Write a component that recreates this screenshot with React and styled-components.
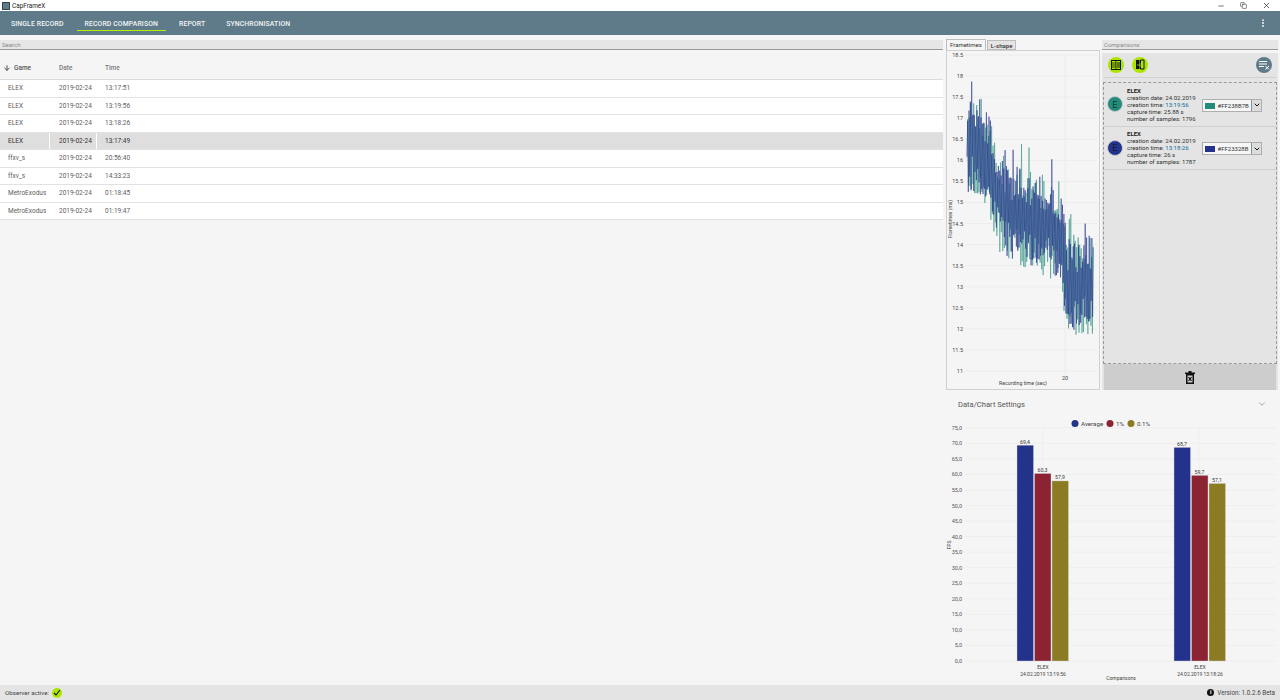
import React from "react";
import styled, { createGlobalStyle } from "styled-components";
import { ArrowDown, ChevronDown, EllipsisVertical, Minus, Copy, X } from "lucide-react";

const Global = createGlobalStyle`
  html, body { margin: 0; padding: 0; background: #f5f5f5; }
  * { box-sizing: border-box; }
  #root { font-family: Roboto, "Noto Sans", sans-serif; }
`;
const Page = styled.div`display:flex;flex-direction:column;width:1280px;height:700px;overflow:hidden;background:#f5f5f5;`;
const TitleBar = styled.div`display:flex;align-items:center;height:11px;background:#fff;padding-left:2px;font:6.4px Roboto,sans-serif;color:#222;`;
const AppIcon = styled.div`width:8px;height:8px;background:#5f7a88;border:1px solid #34434c;margin-right:2px;`;
const WinButtons = styled.div`margin-left:auto;display:flex;gap:15px;padding-right:9px;color:#333;align-items:center;`;
const Nav = styled.nav`display:flex;align-items:stretch;height:24px;background:#5f7b8a;padding-left:3px;padding-right:12px;`;
const NavItem = styled.div`display:flex;align-items:center;padding:6px 8px 0;margin-right:5px;font-size:6.85px;font-weight:500;color:#f2f5f6;letter-spacing:.12px;border-bottom:1px solid ${p => p.$active ? "#b4f000" : "transparent"};margin-bottom:4px;white-space:nowrap;`;
const Spacer = styled.div`flex:1;`;
const More = styled.div`display:flex;align-items:center;color:#fff;`;
const Main = styled.main`flex:1;display:flex;min-height:0;`;
const Left = styled.section`width:945px;padding:5px 2px 0 0;display:flex;flex-direction:column;`;
const FieldBar = styled.div`height:10px;background:#e6e6e6;border-bottom:1px solid #9a9a9a;font-size:6px;color:#8a8a8a;line-height:9px;padding-left:2px;`;
const Row = styled.div`display:grid;grid-template-columns:50px 47px 1fr;height:17.5px;border-bottom:1px solid #e2e2e2;background:#fff;align-items:stretch;font-size:6.5px;color:#5e5e5e;`;
const HeadRow = styled(Row)`height:30px;background:#f5f5f5;border-bottom:1px solid #dcdcdc;color:#7b7b7b;font-weight:500;padding-top:6px;`;
const Cell = styled.div`display:flex;align-items:center;padding-left:${p => p.$pl}px;background:${p => p.$sel ? "#dedede" : "transparent"};margin-right:${p => p.$sel && p.$gap ? "1.5px" : 0};color:${p => p.$sel ? "#333" : "inherit"};overflow:hidden;white-space:nowrap;`;
const Clip = styled.span`display:block;width:37.5px;overflow:hidden;`;
const SortIcon = styled(ArrowDown)`margin-right:3px;color:#333;`;
const GameHead = styled.span`color:#555;`;
const Right = styled.section`width:335px;display:flex;flex-direction:column;padding-top:4px;`;
const TopRow = styled.div`display:flex;height:351px;`;
const ChartCol = styled.div`width:155px;margin-left:1px;display:flex;flex-direction:column;`;
const Tabs = styled.div`display:flex;height:11px;align-items:flex-end;`;
const Tab = styled.div`height:${p => p.$active ? "11px" : "10px"};padding:0 3px;margin-right:1px;font-size:6px;font-weight:${p => p.$active ? 400 : 500};line-height:9.5px;color:#333;background:${p => p.$active ? "#f5f5f5" : "#e4e4e4"};border:1px solid #bdbdbd;border-bottom:${p => p.$active ? "none" : "1px solid #bdbdbd"};`;
const ChartBox = styled.div`height:340px;width:154px;background:#f5f5f5;border:1px solid #d0d0d0;`;
const CompCol = styled.div`width:176px;margin-left:1px;display:flex;flex-direction:column;padding-top:1px;`;
const CompBox = styled.div`margin-top:3px;flex:1;background:#e4e4e4;display:flex;flex-direction:column;padding:0 1px;`;
const Toolbar = styled.div`display:flex;align-items:center;height:25px;padding:0 4px 1px 3.5px;margin:0 1px;gap:8.5px;border-bottom:1px solid #d0d0d0;`;
const RoundBtn = styled.div`width:16px;height:16px;border-radius:50%;background:${p => p.$bg};display:flex;align-items:center;justify-content:center;margin-left:${p => p.$auto ? "auto" : 0};`;
const Dashed = styled.div`margin-top:4px;flex:1;border:1px dashed #9a9a9a;display:flex;flex-direction:column;`;
const Item = styled.div`height:43.5px;border-bottom:1px solid #cfcfcf;display:flex;align-items:center;padding-left:3px;`;
const Avatar = styled.div`width:16px;height:16px;border-radius:50%;border:1px solid #ccc;background:${p => p.$c};color:#111;font-size:9.5px;font-weight:300;display:flex;align-items:center;justify-content:center;margin-right:4px;`;
const Info = styled.div`width:75px;font-size:6.05px;line-height:7.05px;color:#333;white-space:nowrap;`;
const InfoTitle = styled.div`font-weight:700;color:#222;`;
const Blue = styled.span`color:#0f6b9c;`;
const Combo = styled.div`display:flex;height:13px;width:60px;border:1px solid #aeaeae;background:#f6f6f6;margin-top:2px;`;
const Swatch = styled.div`width:10px;height:6px;background:${p => p.$c};margin:3px 2.5px 0 2px;`;
const ComboText = styled.div`flex:1;font-size:6px;line-height:11px;color:#333;`;
const ComboArrow = styled.div`width:10px;border-left:1px solid #8e8e8e;background:#dcdcdc;display:flex;align-items:center;justify-content:center;color:#111;`;
const Fill = styled.div`flex:1;`;
const TrashBar = styled.div`height:26px;background:#cdcdcd;display:flex;align-items:center;justify-content:center;margin:0 1px;`;
const SettingsHead = styled.div`height:22px;margin-top:3px;margin-bottom:2px;display:flex;align-items:center;justify-content:space-between;padding:0 13px 0 13px;font-size:7.6px;color:#555;`;
const BarWrap = styled.div`height:268px;margin-left:1px;`;
const Status = styled.footer`height:15px;background:#e4e4e4;display:flex;align-items:center;padding:0 5px;font-size:6.2px;color:#444;`;
const OkBadge = styled.div`width:10px;height:10px;border-radius:50%;background:#aee500;margin-left:2.5px;display:flex;align-items:center;justify-content:center;`;
const Version = styled.div`margin-left:auto;display:flex;align-items:center;gap:3px;font-size:6.3px;`;
const InfoDot = styled.div`width:7px;height:7px;border-radius:50%;background:#111;color:#fff;font-size:5.5px;line-height:7px;text-align:center;font-weight:700;`;

const rows = [["ELEX","13:17:51"],["ELEX","13:19:56"],["ELEX","13:18:26"],["ELEX","13:17:49",true],["ffxv_s","20:56:40"],["ffxv_s","14:33:23"],["MetroExodus","01:18:45"],["MetroExodus","01:19:47"]];

const pts = [[0,16.4],[2,16.4],[4,16.1],[6.5,15.1],[9,14.75],[13,14.55],[17,14.45],[19.2,14.2],[20.5,13],[26,13.1]];
const baseAt = t => { for (let i=1;i<pts.length;i++) if (t<=pts[i][0]) { const [a,b]=pts[i-1],[c,d]=pts[i]; return b+(d-b)*(t-a)/(c-a);} return 13; };
const rng = seed => { let s=seed; return () => (s=(s*16807)%2147483647)/2147483647; };
const series = (seed, n, amp) => {
  const r=rng(seed); const out=[];
  for(let i=0;i<n;i++){
    const t=i/n*25.9; const u=r(), v=r();
    const dir = i%2 ? 1 : -1;
    let a = dir*(.3+u*amp);
    if(v>.93 && dir>0) a+=.5;
    const y=baseAt(t)+a;
    out.push((t*4.9+20).toFixed(1)+","+(25+(18-y)*42.15).toFixed(1));
  }
  return out.join(" ");
};

const yTicks = Array.from({length:16},(_,i)=>18.5-i*.5);
const FrameChart = () => (
  <svg width="152" height="338" style={{display:"block"}}>
    {yTicks.map((v,i)=>{const y=4+i*21.07;return <g key={v}><line x1="18" x2="150" y1={y} y2={y} stroke="#ececec"/><text x="16" y={y+2} fontSize="5.5" textAnchor="end" fill="#444" fontFamily="Roboto">{v}</text></g>})}
    <line x1="118" x2="118" y1="4" y2="325" stroke="#ececec"/>
    <polyline points={series(7,170,.95)} fill="none" stroke="#238B7B" strokeWidth=".7" strokeOpacity=".7"/>
    <polyline points={series(4242,190,.85)} fill="none" stroke="#23328B" strokeWidth=".7" strokeOpacity=".8"/>
    <text x="118" y="329" fontSize="5.5" textAnchor="middle" fill="#444" fontFamily="Roboto">20</text>
    <text x="76" y="334" fontSize="5.2" textAnchor="middle" fill="#444" fontFamily="Roboto">Recording time (sec)</text>
    <text transform="translate(5,168) rotate(-90)" fontSize="5" textAnchor="middle" fill="#444" fontFamily="Roboto">Frametimes (ms)</text>
  </svg>
);

const bars = [{x:71,v:[69.4,60.3,57.9],l:"24.02.2019 13:19:56"},{x:228,v:[68.7,59.7,57.1],l:"24.02.2019 13:18:26"}];
const colors = ["#23328B","#8B2332","#8B7B23"];
const BarChart = () => {
  const y0 = 244, k = 15.55/5;
  return (
  <svg width="333" height="268" style={{display:"block"}} fontFamily="Roboto">
    {Array.from({length:16},(_,i)=>i*5).map(v=>{const y=y0-v*k;return <g key={v}><line x1="19" x2="330" y1={y} y2={y} stroke="#eeeeee"/><text x="16" y={y+2} fontSize="5.5" textAnchor="end" fill="#555">{v.toFixed(1).replace(".",",")}</text></g>})}
    {[97,253].map(x=><line key={x} x1={x} x2={x} y1="11" y2={y0} stroke="#eeeeee"/>)}
    <circle cx="129" cy="6.5" r="3.5" fill={colors[0]}/><text x="135" y="8.7" fontSize="6.2" fill="#444">Average</text>
    <circle cx="164" cy="6.5" r="3.5" fill={colors[1]}/><text x="170" y="8.7" fontSize="6.2" fill="#444">1%</text>
    <circle cx="185" cy="6.5" r="3.5" fill={colors[2]}/><text x="191" y="8.7" fontSize="6.2" fill="#444">0.1%</text>
    {bars.map(b=><g key={b.x}>
      {b.v.map((v,i)=><g key={i}>
        <rect x={b.x+i*17.5} y={y0-v*k} width="16.5" height={v*k} fill={colors[i]} stroke="#d8d8e0" strokeWidth=".4"/>
        <text x={b.x+8+i*17.5} y={y0-v*k-1.5} fontSize="5.2" textAnchor="middle" fill="#333">{v.toFixed(1).replace(".",",")}</text>
      </g>)}
      <text x={b.x+26} y={251.5} fontSize="5" textAnchor="middle" fill="#444">ELEX</text>
      <text x={b.x+26} y={258.5} fontSize="5" textAnchor="middle" fill="#444">{b.l}</text>
    </g>)}
    <text x="175" y="262.5" fontSize="5" textAnchor="middle" fill="#444">Comparisons</text>
    <text transform="translate(5,128) rotate(-90)" fontSize="5" textAnchor="middle" fill="#444">FPS</text>
  </svg>
)};

const ColumnsIcon = () => (
  <svg width="10" height="10" viewBox="0 0 10 10"><rect x=".5" y=".5" width="9" height="9" fill="none" stroke="#111"/><path d="M5 0v10M0 3h5M0 5h5M0 7h5" stroke="#111" strokeWidth=".8"/><path d="M6 3h3M6 5h3M6 7h3" stroke="#111" strokeWidth="1"/></svg>
);
const SwapIcon = () => (
  <svg width="10" height="11" viewBox="0 0 10 11"><path d="M1 1h3.5v9H1z" fill="#111"/><path d="M5.5 1H9v9H5.5z" fill="none" stroke="#111"/><path d="M2 6h5M5.5 4.5 7.5 6l-2 1.5" stroke="#aee500" fill="none" strokeWidth=".8"/></svg>
);
const ClearIcon = () => (
  <svg width="11" height="10" viewBox="0 0 11 10"><path d="M0 1.5h8M0 4h8M0 6.5h5" stroke="#fff"/><path d="M6.5 6 10 9.5M10 6 6.5 9.5" stroke="#fff"/></svg>
);
const Trash = () => (
  <svg width="10" height="13" viewBox="0 0 10 13"><path d="M0 1.5h10V3H0zM3.5 0h3v1.5h-3z" fill="#111"/><path d="M1 3h8v10H1z" fill="#111"/><rect x="2.5" y="4.5" width="5" height="7" fill="#cdcdcd"/><path d="M3.5 6.2 6.5 9.8M6.5 6.2 3.5 9.8" stroke="#111" strokeWidth="1.1"/></svg>
);

const Comparison = ({c, hex, time, cap, n}) => (
  <Item>
    <Avatar $c={c}>E</Avatar>
    <Info>
      <InfoTitle>ELEX</InfoTitle>
      creation date: 24.02.2019<br/>
      creation time: <Blue>{time}</Blue><br/>
      capture time: {cap}<br/>
      number of samples: {n}
    </Info>
    <Combo><Swatch $c={c}/><ComboText>{hex}</ComboText><ComboArrow><ChevronDown size={8} strokeWidth={3}/></ComboArrow></Combo>
  </Item>
);

export default function App() {
  return (
    <Page>
      <Global/>
      <TitleBar>
        <AppIcon/>CapFrameX
        <WinButtons><Minus size={8}/><Copy size={7}/><X size={9}/></WinButtons>
      </TitleBar>
      <Nav>
        <NavItem>SINGLE RECORD</NavItem>
        <NavItem $active>RECORD COMPARISON</NavItem>
        <NavItem>REPORT</NavItem>
        <NavItem>SYNCHRONISATION</NavItem>
        <Spacer/>
        <More><EllipsisVertical size={10} strokeWidth={2.5}/></More>
      </Nav>
      <Main>
        <Left>
          <FieldBar>Search</FieldBar>
          <HeadRow>
            <Cell $pl={3}><SortIcon size={8} strokeWidth={2.5}/><GameHead>Game</GameHead></Cell>
            <Cell $pl={9}>Date</Cell>
            <Cell $pl={8}>Time</Cell>
          </HeadRow>
          {rows.map((r,i)=>(
            <Row key={i}>
              <Cell $pl={8} $sel={r[2]} $gap={1}><Clip>{r[0]}</Clip></Cell>
              <Cell $pl={9} $sel={r[2]} $gap={1}>2019-02-24</Cell>
              <Cell $pl={8} $sel={r[2]}>{r[1]}</Cell>
            </Row>
          ))}
        </Left>
        <Right>
          <TopRow>
            <ChartCol>
              <Tabs><Tab $active>Frametimes</Tab><Tab>L-shape</Tab></Tabs>
              <ChartBox><FrameChart/></ChartBox>
            </ChartCol>
            <CompCol>
              <FieldBar>Comparisons</FieldBar>
              <CompBox>
                <Toolbar>
                  <RoundBtn $bg="#aee500"><ColumnsIcon/></RoundBtn>
                  <RoundBtn $bg="#aee500"><SwapIcon/></RoundBtn>
                  <RoundBtn $bg="#5f7b8a" $auto><ClearIcon/></RoundBtn>
                </Toolbar>
                <Dashed>
                  <Comparison c="#238B7B" hex="#FF238B7B" time="13:19:56" cap="25.88 s" n="1796"/>
                  <Comparison c="#23328B" hex="#FF23328B" time="13:18:26" cap="26 s" n="1787"/>
                  <Fill/>
                </Dashed>
                <TrashBar><Trash/></TrashBar>
              </CompBox>
            </CompCol>
          </TopRow>
          <SettingsHead>Data/Chart Settings<ChevronDown size={10} color="#999"/></SettingsHead>
          <BarWrap><BarChart/></BarWrap>
        </Right>
      </Main>
      <Status>
        Observer active:
        <OkBadge><svg width="8" height="7" viewBox="0 0 8 7"><path d="M1 4l2 2 4-5" stroke="#111" strokeWidth="1.1" fill="none"/></svg></OkBadge>
        <Version><InfoDot>i</InfoDot>Version: 1.0.2.6 Beta</Version>
      </Status>
    </Page>
  );
}
